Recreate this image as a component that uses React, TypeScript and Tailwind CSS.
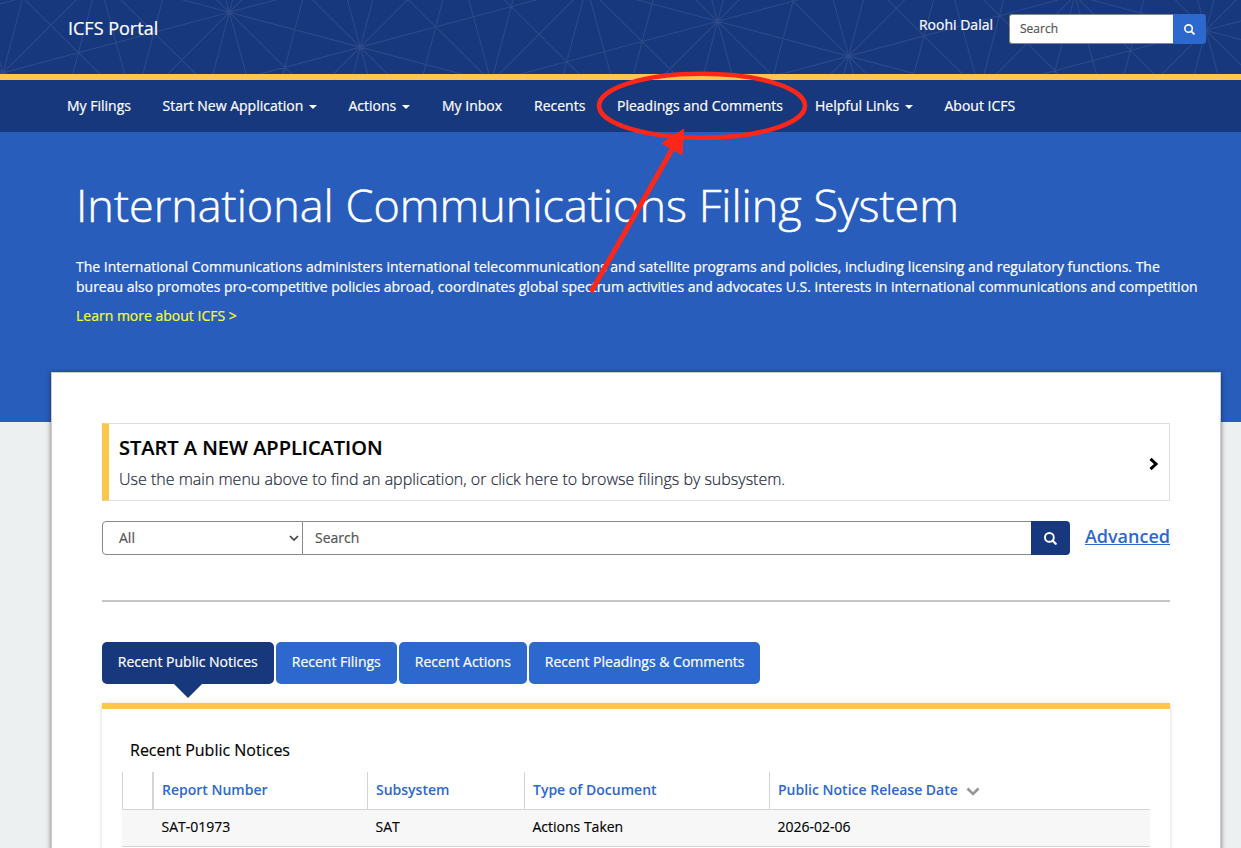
interface NavItem {
  label: string;
  caret?: boolean;
  width: string;
}

interface Notice {
  report: string;
  subsystem: string;
  type: string;
  released: string;
}

const navItems: NavItem[] = [
  { label: "My Filings", width: "w-[95.5px]" },
  { label: "Start New Application", caret: true, width: "w-[186px]" },
  { label: "Actions", caret: true, width: "w-[93.5px]" },
  { label: "My Inbox", width: "w-[92px]" },
  { label: "Recents", width: "w-[83px]" },
  { label: "Pleadings and Comments", width: "w-[198px]" },
  { label: "Helpful Links", caret: true, width: "w-[129.5px]" },
  { label: "About ICFS", width: "w-[90px]" },
];

const tabs = [
  { label: "Recent Public Notices", width: "w-[172px]" },
  { label: "Recent Filings", width: "w-[121px]" },
  { label: "Recent Actions", width: "w-[128px]" },
  { label: "Recent Pleadings & Comments", width: "w-[231px]" },
];

const notices: Notice[] = [
  { report: "SAT-01973", subsystem: "SAT", type: "Actions Taken", released: "2026-02-06" },
];

// Triangular lattice: edges to the neighbours plus the long diagonals
const latticePath = () => {
  const a = [131, 34.8];
  const b = [95.3, -95.4];
  const steps = [[1, 0], [0, 1], [1, -1], [1, 1], [2, -1], [1, -2]];
  let d = "";
  for (let i = -12; i <= 14; i++) {
    for (let j = -12; j <= 14; j++) {
      const x = 229.3 + i * a[0] + j * b[0];
      const y = 12.3 + i * a[1] + j * b[1];
      if (x < -300 || x > 1500 || y < -400 || y > 500) continue;
      for (const [m, n] of steps) {
        const dx = m * a[0] + n * b[0];
        const dy = m * a[1] + n * b[1];
        d += `M${x.toFixed(1)} ${y.toFixed(1)}l${dx.toFixed(1)} ${dy.toFixed(1)}`;
      }
    }
  }
  return d;
};

function SearchIcon({ size }: { size: number }) {
  return (
    <svg width={size} height={size} viewBox="0 0 13 13" fill="none" stroke="currentColor">
      <circle cx="5.4" cy="5.4" r="4.4" strokeWidth="1.9" />
      <path d="M8.7 8.7l3 3" strokeWidth="2.3" strokeLinecap="round" />
    </svg>
  );
}

function Header() {
  return (
    <header className="relative h-20 overflow-hidden border-b-6 border-[#fdc64c] bg-[#17387d]">
      <svg className="absolute inset-0" width="1241" height="74" fill="none">
        <path d={latticePath()} stroke="#2c4a89" strokeWidth="1.1" />
      </svg>
      <div className="relative flex items-start pr-[35px] pl-[68px] text-white [-webkit-text-stroke:0.2px]">
        <div className="pt-[15px] text-lg leading-[27px]">ICFS Portal</div>
        <div className="mt-[15px] mr-4 ml-auto text-sm leading-5">Roohi Dalal</div>
        <form className="mt-[14px] flex h-[30px] w-[197px]">
          <input
            type="text"
            placeholder="Search"
            className="w-[164px] rounded-l-[3px] border border-r-0 border-[#888] bg-white px-2.5 text-xs text-gray-700 placeholder:text-[#555] focus:outline-none"
          />
          <button
            type="button"
            aria-label="Search site"
            className="flex flex-1 items-center justify-center rounded-r-[3px] bg-[#2c68cd]"
          >
            <SearchIcon size={11} />
          </button>
        </form>
      </div>
    </header>
  );
}

function Nav() {
  return (
    <nav className="flex h-[52px] items-center bg-[#17387d] pl-[67px] text-sm text-white [-webkit-text-stroke:0.2px]">
      {navItems.map((item) => (
        <a key={item.label} href="#" className={`${item.width} flex shrink-0 items-center whitespace-nowrap`}>
          {item.label}
          {item.caret && (
            <span className="mt-0.5 ml-1.5 border-x-4 border-t-4 border-x-transparent border-t-white" />
          )}
        </a>
      ))}
    </nav>
  );
}

function Hero() {
  return (
    <section className="h-[290px] bg-[#285dbc] pt-[41px] pl-[76px] text-white">
      <h1 className="text-[45px] leading-[64px] font-light whitespace-nowrap [-webkit-text-stroke:0.5px]">
        International Communications Filing System
      </h1>
      <p className="mt-5 text-sm leading-5 whitespace-nowrap [-webkit-text-stroke:0.2px]">
        The International Communications administers international telecommunications and satellite programs and policies, including licensing and regulatory functions. The
        <br />
        bureau also promotes pro-competitive policies abroad, coordinates global spectrum activities and advocates U.S. interests in international communications and competition
      </p>
      <a href="#" className="mt-[9px] block text-sm leading-5 text-[#f8fc2c] [-webkit-text-stroke:0.2px]">
        Learn more about ICFS &gt;
      </a>
    </section>
  );
}

function SearchBar() {
  return (
    <div className="mt-5 flex h-[34px] items-stretch">
      <div className="flex w-[201px] items-center justify-between rounded-l border border-[#888] pr-[3px] pl-4 text-sm text-[#555] [-webkit-text-stroke:0.2px]">
        All
        <svg width="10" height="6" viewBox="0 0 10 6" fill="none">
          <path d="M1 1l4 4 4-4" stroke="#444" strokeWidth="1.7" />
        </svg>
      </div>
      <input
        type="text"
        placeholder="Search"
        className="w-[728px] border-y border-[#888] px-3 text-sm placeholder:text-[#555] [-webkit-text-stroke:0.2px] focus:outline-none"
      />
      <button
        type="button"
        aria-label="Search records"
        className="flex w-[39px] items-center justify-center rounded-r bg-[#17387d] text-white"
      >
        <SearchIcon size={13} />
      </button>
      <a href="#" className="ml-auto text-lg leading-[30px] font-semibold text-[#2c68cd] underline">
        Advanced
      </a>
    </div>
  );
}

function Tabs() {
  return (
    <div className="mt-10 flex gap-0.5 text-sm text-white [-webkit-text-stroke:0.2px]">
      {tabs.map((tab, i) => (
        <button
          key={tab.label}
          type="button"
          className={`${tab.width} relative flex h-[42px] rounded-[5px] pt-2.5 pl-[15.8px] leading-5 whitespace-nowrap ${
            i === 0 ? "bg-[#17387d]" : "bg-[#2c68cd]"
          }`}
        >
          {tab.label}
          {i === 0 && (
            <span className="absolute top-full left-1/2 -translate-x-1/2 border-x-14 border-t-14 border-x-transparent border-t-[#17387d]" />
          )}
        </button>
      ))}
    </div>
  );
}

function NoticesTable() {
  return (
    <section className="mt-[19px] h-[300px] border-t-6 border-[#fdc64c] px-5 pt-[29px] text-black shadow-[0_1px_4px_rgba(0,0,0,0.18)]">
      <h2 className="pl-2 text-base leading-6 [-webkit-text-stroke:0.15px]">Recent Public Notices</h2>
      <table className="mt-[10px] w-[1028px] table-fixed border-separate border-spacing-0 text-left text-sm">
        <thead>
          <tr className="h-[38px] text-[#2c68cd] [&>th]:border-b [&>th]:border-l [&>th]:border-[#d5d5d5] [&>th]:px-2 [&>th]:pt-0 [&>th]:pb-0.5 [&>th]:font-semibold">
            <th className="w-[31px] border-r" />
            <th className="w-[214px]">Report Number</th>
            <th className="w-[157px]">Subsystem</th>
            <th className="w-[245px]">Type of Document</th>
            <th>
              <span className="flex items-center">
                Public Notice Release Date
                <svg className="mt-[3px] ml-2" width="14" height="9" viewBox="0 0 14 9" fill="none">
                  <path d="M1.5 1.5L7 7l5.5-5.5" stroke="#959595" strokeWidth="2.6" />
                </svg>
              </span>
            </th>
          </tr>
        </thead>
        <tbody>
          {notices.map((n) => (
            <tr
              key={n.report}
              className="h-[37px] bg-[#f7f7f7] [-webkit-text-stroke:0.15px] [&>td]:border-b [&>td]:border-[#d5d5d5] [&>td]:px-[8.5px] [&>td]:pt-0 [&>td]:pb-0.5"
            >
              <td />
              <td>{n.report}</td>
              <td>{n.subsystem}</td>
              <td>{n.type}</td>
              <td>{n.released}</td>
            </tr>
          ))}
        </tbody>
      </table>
    </section>
  );
}

// Red callout circling the Pleadings and Comments link
function Callout() {
  return (
    <svg className="pointer-events-none absolute top-0 left-0" width="1241" height="320" fill="none">
      <ellipse cx="702" cy="105.7" rx="103" ry="32" stroke="#fd2719" strokeWidth="4.6" />
      <path d="M591 292L674 146" stroke="#fd2719" strokeWidth="5" />
      <path d="M684 128.5L661 143.5L682.5 155.5Z" fill="#fd2719" />
    </svg>
  );
}

export default function App() {
  return (
    <div className="relative h-[848px] w-[1241px] overflow-hidden bg-[#ecf0f1] font-['Open_Sans',sans-serif]">
      <Header />
      <Nav />
      <Hero />
      <main className="relative -mt-[50px] ml-[51px] h-[600px] w-[1170px] border border-[#ccc] bg-white px-[50px] pt-[50px] shadow-[0_1px_5px_rgba(0,0,0,0.5)]">
        <a
          href="#"
          className="flex h-[78px] items-center justify-between border border-l-7 border-[#dadfe0] border-l-[#fdc64c] pr-[10px] pl-2.5"
        >
          <div className="pt-[3px]">
            <h2 className="text-xl leading-7 font-semibold text-black [-webkit-text-stroke:0.2px]">START A NEW APPLICATION</h2>
            <p className="mt-[3px] text-base leading-7 font-light text-[#1f2b40] [-webkit-text-stroke:0.2px]">
              Use the main menu above to find an application, or click here to browse filings by subsystem.
            </p>
          </div>
          <svg className="mt-[3px]" width="10" height="14" viewBox="0 0 10 14" fill="none">
            <path d="M1.5 1.8L7 7l-5.5 5.2" stroke="#000" strokeWidth="3" />
          </svg>
        </a>
        <SearchBar />
        <hr className="mt-[45px] border-t-2 border-[#c5c5c5]" />
        <Tabs />
        <NoticesTable />
      </main>
      <Callout />
    </div>
  );
}
